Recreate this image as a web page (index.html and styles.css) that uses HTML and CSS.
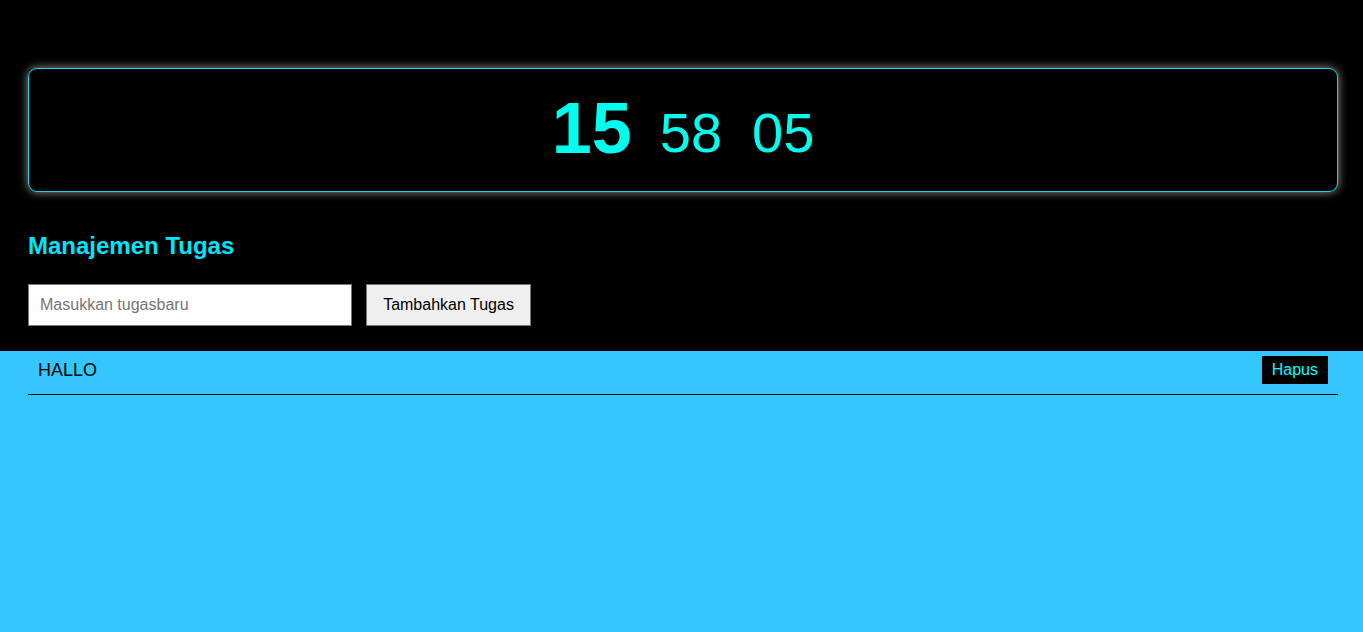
FILE: index.html
```html
<!DOCTYPE html>
<html lang="id">
<head>
<meta charset="utf-8">
<title>Jam &amp; Tugas</title>
<link rel="stylesheet" href="styles.css">
</head>
<body>
<header class="top">
  <div class="clock">
    <span class="hours">15</span>
    <span class="mins">58</span>
    <span class="secs">05</span>
  </div>
  <h2 class="title">Manajemen Tugas</h2>
  <div class="form">
    <input class="task-input" type="text" placeholder="Masukkan tugasbaru">
    <button class="add-btn">Tambahkan Tugas</button>
  </div>
</header>
<main class="list-area">
  <ul class="tasks">
    <li class="task">
      <span class="task-text">HALLO</span>
      <button class="del-btn">Hapus</button>
    </li>
  </ul>
</main>
</body>
</html>
```

FILE: styles.css
```css
html, body {
  margin: 0;
  padding: 0;
  height: 100%;
}
body {
  background: #33c6ff;
  font-family: "Liberation Sans", Arial, sans-serif;
  display: flex;
  flex-direction: column;
}
.top {
  background: #000;
  padding: 68px 25px 0 28px;
  height: 282.5px;
  box-sizing: content-box;
}
.clock {
  height: 122px;
  border: 1px solid #10d8e8;
  border-radius: 9px;
  box-shadow: 0 0 10px rgba(255, 255, 255, 0.6);
  display: flex;
  align-items: center;
  justify-content: center;
  color: #00ffee;
}
.hours {
  font-size: 72px;
  font-weight: bold;
  margin-right: 28px;
  line-height: 1;
  position: relative;
  top: -2px;
}
.mins, .secs {
  font-size: 56px;
  line-height: 1;
  position: relative;
  top: 3px;
}
.mins { margin-right: 30px; }
.title {
  margin: 40px 0 0;
  font-size: 24px;
  line-height: 28px;
  color: #00e5ff;
}
.form {
  display: flex;
  gap: 14px;
  margin-top: 24px;
}
.task-input {
  width: 324px;
  height: 42px;
  box-sizing: border-box;
  border: 1px solid #767676;
  padding: 0 11px;
  font-family: "Liberation Sans", Arial, sans-serif;
  font-size: 16px;
  background: #fff;
}
.task-input::placeholder {
  color: #757575;
}
.add-btn {
  height: 42px;
  box-sizing: border-box;
  width: 165px;
  border: 1px solid #767676;
  background: #efefef;
  font-family: "Liberation Sans", Arial, sans-serif;
  font-size: 16px;
  color: #000;
  padding: 0;
}
.list-area {
  flex: 1;
  padding: 0 25px 0 28px;
}
.tasks {
  list-style: none;
  margin: 0;
  padding: 0;
}
.task {
  display: flex;
  align-items: center;
  justify-content: space-between;
  padding: 5.5px 10px 10px;
  border-bottom: 1px solid #000;
  font-size: 18px;
  color: #000;
}
.del-btn {
  background: #000;
  color: #00ffff;
  border: none;
  padding: 5px 10px;
  height: 28px;
  font-family: "Liberation Sans", Arial, sans-serif;
  font-size: 16px;
}
```
